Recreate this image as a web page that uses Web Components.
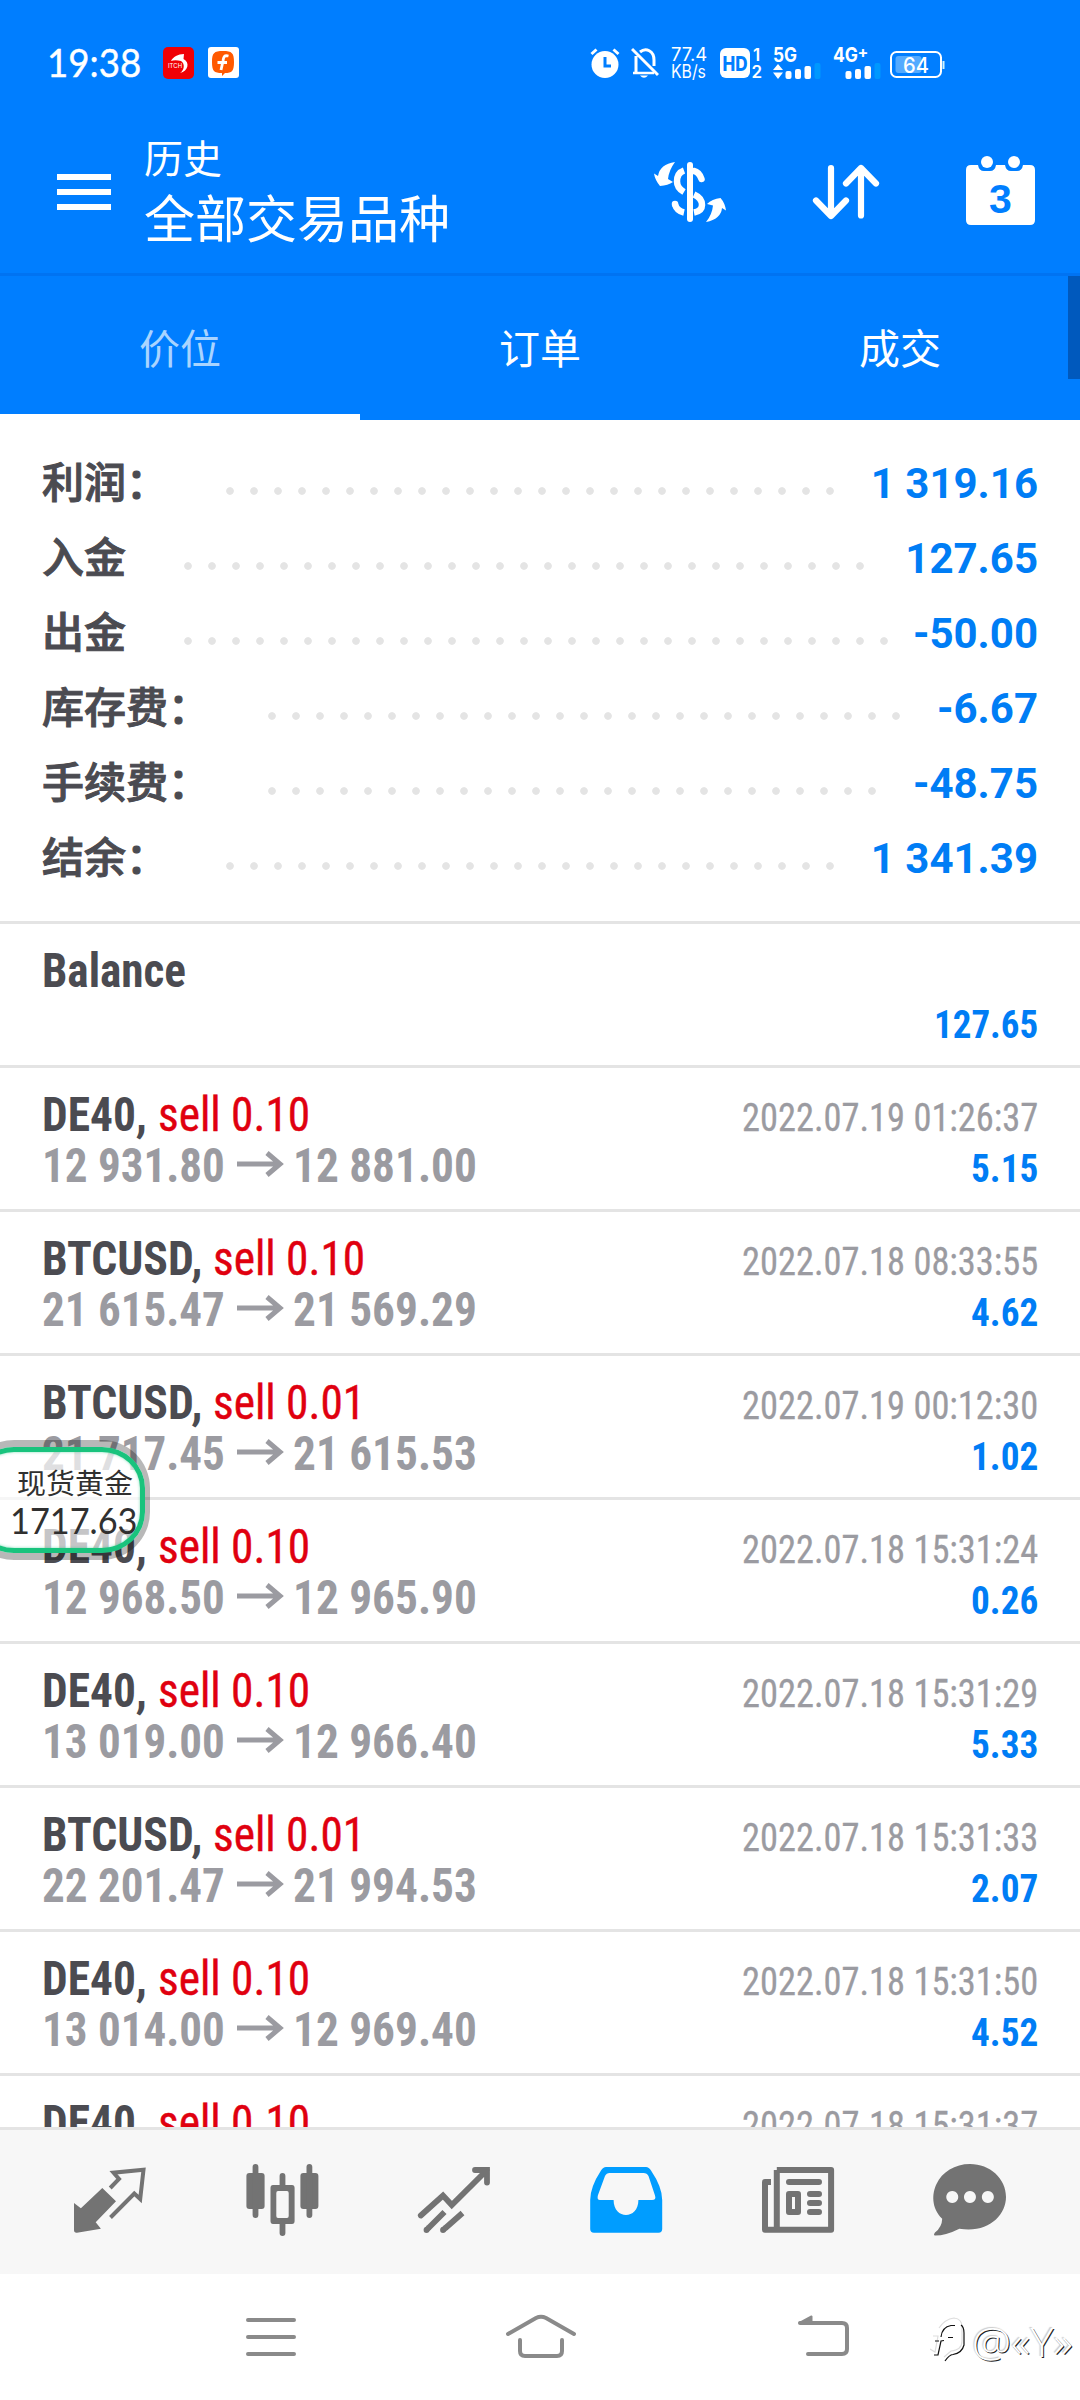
<!DOCTYPE html>
<html lang="zh-CN">
<head>
<meta charset="utf-8">
<title>历史</title>
<style>
html,body{margin:0;padding:0}
body{width:1080px;height:2400px;overflow:hidden;background:#fff;font-family:Roboto,"Noto Sans CJK SC",sans-serif}
</style>
</head>
<body>
<history-screen></history-screen>
<script>
const define=(name,html,after)=>{
  const t=document.createElement('template');
  t.innerHTML=html;
  customElements.define(name,class extends HTMLElement{
    connectedCallback(){
      if(this.shadowRoot)return;
      this.attachShadow({mode:'open'}).append(t.content.cloneNode(true));
      if(after)after(this,this.shadowRoot);
    }
  });
};

/* Text squeezed or stretched horizontally to a given width */
define('fit-text',`<style>
:host{display:inline-block;white-space:pre;flex:none}
span{display:inline-block;transform-origin:0 50%}
</style><span><slot></slot></span>`,(el,root)=>{
  const s=root.querySelector('span'),w=+el.getAttribute('w');
  s.textContent=el.textContent;
  const n=s.offsetWidth;
  s.style.transform='scaleX('+w/n+')';
  el.style.width=w+'px';
});

define('status-bar',`<style>
:host{display:flex;height:126px;box-sizing:border-box;padding:0 135px 0 47px;align-items:center;color:#fff;font-family:Lato,sans-serif}
.time{font-size:39px;line-height:60px;margin-top:-3px;-webkit-text-stroke:.4px #fff}
svg{display:block;flex:none}
.apps{display:flex;gap:14px;margin-left:22px}
.right{display:flex;align-items:center;margin-left:auto;height:34px;margin-top:-1px}
.net{display:flex;flex-direction:column;width:37px;margin-left:12px;font-family:Inter,sans-serif}
.net fit-text{font-size:18px;line-height:17px}
</style>
<fit-text class="time" w="94">19:38</fit-text>
<div class="apps">
<svg width="31" height="32" viewBox="0 0 31 32"><rect width="31" height="32" rx="5" fill="#f00005"/><path d="M8 14C10 10 15 7 21 7L20.500 12C27 15 25.500 24 17 26C21 23.500 22.500 17 18 14Q12 12.500 8 14Z" fill="#fff"/><text x="5" y="21" font-size="6" font-family="Inter" fill="#fff">ITCH</text></svg>
<svg width="31" height="31" viewBox="0 0 31 31"><rect width="31" height="31" rx="3" fill="#fff"/><path d="M15 4C24 4 26 6 26 15C26 24 24 26 17 26L14 29V26C6 26 4 24 4 15C4 6 6 4 15 4Z" fill="#ff5900"/><path d="M20.500 9C16 8 15.500 10 15 14L13 23M9.500 15.500H19" stroke="#fff" stroke-width="2.800" fill="none"/></svg>
</div>
<div class="right">
<svg width="30" height="34" viewBox="0 0 30 34"><circle cx="15" cy="18.500" r="13.500" fill="#fff"/><path d="M1.500 8L6.500 3.500M28.500 8L23.500 3.500" stroke="#fff" stroke-width="3"/><path d="M15 11V20H21" fill="none" stroke="#007eff" stroke-width="3"/></svg>
<svg width="28" height="34" viewBox="0 0 28 34" style="margin-left:11px"><path d="M1 3L27 29M5 10V26M9 6C15 1 23 5 23 14V20" fill="none" stroke="#fff" stroke-width="3"/><path d="M2 27H23" stroke="#fff" stroke-width="2.500"/><path d="M9 29.500H17Q13 34 9 29.500Z" fill="#fff"/></svg>
<div class="net"><fit-text w="36">77.4</fit-text><fit-text w="35">KB/s</fit-text></div>
<svg width="43" height="34" viewBox="0 0 43 34" style="margin-left:12px"><rect y="2" width="30" height="30" rx="6" fill="#fff"/><text x="2.500" y="24.500" font-family="Inter" font-weight="800" font-size="20" textLength="25" lengthAdjust="spacingAndGlyphs" fill="#007eff">HD</text><text x="33" y="15" font-family="Inter" font-weight="600" font-size="17" fill="#fff">1</text><text x="31.500" y="32" font-family="Inter" font-weight="600" font-size="17" fill="#fff">2</text></svg>
<svg width="48" height="34" viewBox="0 0 48 34" style="margin-left:10px"><text x="0" y="16" font-family="Inter" font-weight="700" font-size="20" textLength="24" lengthAdjust="spacingAndGlyphs" fill="#fff">5G</text><path d="M0 24L5 18L10 24ZM0 26.500L5 33L10 26.500Z" fill="#fff"/><g fill="#fff"><rect x="12.500" y="25" width="6" height="8" rx="2"/><rect x="22" y="23" width="6" height="10" rx="2"/><rect x="31.500" y="20" width="6.500" height="13" rx="2"/></g><rect x="41.500" y="17" width="6" height="16" rx="2" fill="#0098ff"/></svg>
<svg width="48" height="34" viewBox="0 0 48 34" style="margin-left:12px"><text x="0" y="16" font-family="Inter" font-weight="700" font-size="20" textLength="25" lengthAdjust="spacingAndGlyphs" fill="#fff">4G</text><text x="24.500" y="12" font-family="Inter" font-weight="700" font-size="16" fill="#fff">+</text><g fill="#fff"><rect x="12.500" y="25" width="6" height="8" rx="2"/><rect x="22" y="23" width="6" height="10" rx="2"/><rect x="31.500" y="20" width="6.500" height="13" rx="2"/></g><rect x="41.500" y="17" width="6" height="16" rx="2" fill="#0098ff"/></svg>
<svg width="55" height="34" viewBox="0 0 55 34" style="margin-left:9px"><rect x="1" y="6" width="50" height="25" rx="5.500" fill="none" stroke="#fff" stroke-width="2"/><rect x="5.500" y="10" width="26" height="17" rx="3" fill="#53aaff"/><path d="M53.500 15V23" stroke="#d0f4ff" stroke-width="2"/><text x="13" y="27" font-family="Inter" font-weight="500" font-size="21.500" textLength="26" lengthAdjust="spacingAndGlyphs" fill="#fff">64</text></svg>
</div>`);

define('app-header',`<style>
:host{display:flex;height:147px;align-items:flex-start;color:#fff;padding-left:57px;border-bottom:3px solid #0073f2;font-family:"Noto Sans CJK SC",sans-serif}
.menu{display:flex;flex-direction:column;gap:9px;width:54px;padding-top:48px}
.menu i{height:6px;background:#fff}
.titles{display:flex;flex-direction:column;padding-left:33px;flex:1}
.a{font-size:39px;line-height:50px;margin-top:5px}
.b{font-size:51px;line-height:60px;margin-top:5px}
svg{display:block;flex:none}
</style>
<div class="menu"><i></i><i></i><i></i></div>
<div class="titles"><fit-text class="a" w="78">历史</fit-text><fit-text class="b" w="306">全部交易品种</fit-text></div>
<svg width="426" height="147" viewBox="654 126 426 147">
<g fill="none" stroke="#fff" stroke-linecap="round">
<path d="M690 165V219" stroke-width="6"/>
<path d="M684 170.500Q677 173 677 181.500Q677 188 684 192" stroke-width="6.500" stroke-linecap="butt"/>
<path d="M694 171Q699 172 701.500 179" stroke-width="6.500"/>
<path d="M694 194.500Q702 198 702 205Q702 211 694 212.500" stroke-width="6.500" stroke-linecap="butt"/>
<path d="M684 212.500Q677 211 675 204.500" stroke-width="6.500" stroke-linecap="butt"/>
<path d="M831 168V213M816 200.500L831 216L846 200.500M861 215.500V168M846 183.500L861 168L876 183.500" stroke-width="6.200" stroke-linejoin="round"/>
</g>
<circle cx="675" cy="204" r="3.250" fill="#fff"/>
<path d="M675 162Q660 164 658 176L654 173.500Q655 180 660 186Q668 185.500 673 182L668 179Q669 170 675 162Z" fill="#fff"/>
<path d="M706 222Q721 219 722 208L726 210.500Q725 203 720.500 198Q712 199 707 204L713 205.500Q712 215 706 222Z" fill="#fff"/>
<path d="M971 165H978Q979 171 984 171H990Q995 171 996 165H1005Q1006 171 1011 171H1017Q1022 171 1023 165H1030Q1035 165 1035 170V220Q1035 225 1030 225H971Q966 225 966 220V170Q966 165 971 165Z" fill="#fff"/>
<circle cx="987" cy="162" r="6" fill="#fff"/><circle cx="1014" cy="162" r="6" fill="#fff"/>
<text x="1000.500" y="212.500" text-anchor="middle" font-family="Liberation Sans" font-weight="700" font-size="41" fill="#007eff">3</text>
</svg>`);

define('tab-bar',`<style>
:host{display:flex;height:144px;position:relative;color:#fff;font:41px/140px "Noto Sans CJK SC",sans-serif}
::slotted(*){flex:1;text-align:center;box-sizing:border-box;height:144px}
::slotted([active]){color:#a9d4ff;border-bottom:6px solid #fff}
i{position:absolute;right:0;top:0;width:12px;height:103px;background:#0059bd}
</style><slot></slot><i></i>`);

define('summary-row',`<style>
:host{display:flex;height:75px;align-items:center}
.l{font:500 42px/75px "Noto Sans CJK SC",sans-serif;color:#4b4b51;-webkit-text-stroke:1px #4b4b51}
.d{height:8px;margin:22px 0 0 50px;background:radial-gradient(circle at center,#e4e4e4 3.400px,#e4e4e400 4.200px) 0 0/24px 8px}
.v{margin-left:auto;font:700 42px/67px Roboto,sans-serif;color:#007df5;padding-top:8px;white-space:pre}
</style><span class="l"></span><span class="d"></span><span class="v"></span>`,(el,r)=>{
  const g=n=>el.getAttribute(n);
  r.querySelector('.l').textContent=g('label');
  r.querySelector('.d').style.width=g('dots')*24+'px';
  r.querySelector('.v').textContent=g('value');
});

define('deal-row',`<style>
:host{display:flex;flex-direction:column;height:144px;box-sizing:border-box;border-top:3px solid #e4e4e4;padding:21px 42px 0;flex:none;font-family:"Roboto Condensed",Roboto,sans-serif;font-stretch:75%}
div{display:flex;height:51px;align-items:baseline;justify-content:space-between;line-height:51px;font-size:48px}
.s{font-weight:700;color:#4b4b51}
.o{color:#e0000f;margin-left:11px;-webkit-text-stroke:.4px #e0000f}
.p{font-weight:700;color:#9b9ba1}
svg{margin:0 9px 0 11px}
.t{font-size:39.500px;color:#9b9ba1;-webkit-text-stroke:.3px #9b9ba1}
.v{font-size:39.500px;font-weight:700;color:#007df5;margin-left:auto}
.v.alone{margin-top:3px}
p{margin:0;display:flex;align-items:baseline}
</style><div class="one"><p></p></div><div class="two"></div>`,(el,r)=>{
  const g=n=>el.getAttribute(n);
  const add=(p,c,t,w)=>t&&p.insertAdjacentHTML('beforeend','<fit-text class="'+c+'" w="'+w+'">'+t+'</fit-text>');
  const one=r.querySelector('.one'),two=r.querySelector('.two');
  const sym=g('symbol'),p1=one.querySelector('p');
  add(p1,'s',sym,{'DE40,':105,'BTCUSD,':160}[sym]||144);
  add(p1,'o',g('order'),152);
  add(one,'t',g('time'),296);
  if(g('from')){
    const p2=document.createElement('p');
    two.append(p2);
    add(p2,'p',g('from'),183);
    p2.insertAdjacentHTML('beforeend','<svg width="48" height="32" viewBox="0 0 48 32"><path d="M1 14H45M31 3L44 14L31 25" fill="none" stroke="#9b9ba1" stroke-width="5"/></svg>');
    add(p2,'p',g('to'),184);
  }
  add(two,g('from')?'v':'v alone',g('profit'),g('profit').length>4?104:67);
});

define('price-float',`<style>
:host{position:absolute;left:-34px;top:1440px;width:184px;height:120px;box-sizing:border-box;border:solid rgba(0,0,0,.28);border-width:7px 5px;border-radius:48px;background-clip:padding-box}
.in{height:106px;box-sizing:border-box;border:5px solid #19c37d;border-radius:43px/41px;background:rgba(255,255,255,.68);color:#303030;padding-left:34px;display:flex;flex-direction:column;box-shadow:inset 0 0 3px #19c37d88}
.n{font:28.500px/36px "Noto Sans CJK SC",sans-serif;margin:12px 0 0 7px}
.v{font:37px/36px Lato,sans-serif;margin-top:2px}
</style><div class="in"><fit-text class="n" w="116">现货黄金</fit-text><fit-text class="v" w="128">1717.63</fit-text></div>`);

const icons={
trade:`<path d="M32.300 26L46 39.300L25.700 60.300L30.900 66.700L7 70.700Q4 71 4 68V41L10.900 46.300Z"/><path d="M40.200 26L49 17L43.500 10.700L73.500 7.700L70.200 37L64.300 31.500L40.500 55.500" fill="none" stroke="currentColor" stroke-width="4"/>`,
candles:`<rect x="4.400" y="11" width="18.200" height="36" rx="3"/><rect x="10.600" y="2" width="5.800" height="54" rx="2.900"/><path fill-rule="evenodd" d="M31 23H50Q52.600 23 52.600 26V59Q52.600 62 50 62H31Q28.500 62 28.500 59V26Q28.500 23 31 23ZM36 29Q34.300 29 34.300 31V54Q34.300 56 36 56H45Q46.700 56 46.700 54V31Q46.700 29 45 29Z"/><path d="M40.500 14V23M40.500 61V71" stroke="currentColor" stroke-width="5.800" stroke-linecap="round"/><rect x="58.400" y="11" width="18" height="36" rx="3"/><rect x="64.500" y="2" width="5.800" height="54" rx="2.900"/>`,
trend:`<path d="M6.800 53.500L29 33.500L37.800 43L73 8M61 8H73V20.500" fill="none" stroke="currentColor" stroke-width="5.800" stroke-linecap="round"/><path d="M14.500 66L30.500 50M31.500 66L48.500 51" stroke="currentColor" stroke-width="5.800"/><circle cx="12.500" cy="68" r="2.900"/><circle cx="29" cy="68" r="2.900"/><path d="M12.500 68L15 65.500M29 68L32 65.500" stroke="currentColor" stroke-width="5.800"/>`,
inbox:`<path fill-rule="evenodd" d="M20 5H60Q63 5 65 8.500Q76.200 25 76.200 38V67Q76.200 70.700 72.500 70.700H8Q4.200 70.700 4.200 67V38Q4.200 25 15 8.500Q17 5 20 5ZM23.500 11Q20.500 11 19 14L12 33Q10.500 38 14 38H27.600C27.600 58 52.400 58 52.400 38H66Q70.500 38 69 33.500L62.500 14Q61 11 57.500 11Z"/>`,
news:`<path d="M18.800 8H73.100V67.700H7V20H13M18.800 8V67.700" fill="none" stroke="currentColor" stroke-width="6" stroke-linejoin="round"/><path d="M31 20H61M52 32H61M52 41H61M52 50H61" stroke="currentColor" stroke-width="6" stroke-linecap="round"/><path fill-rule="evenodd" d="M31 29H40Q43 29 43 32V50Q43 53 40 53H31Q28 53 28 50V32Q28 29 31 29ZM34 35V47H37V35Z"/>`,
chat:`<path fill-rule="evenodd" d="M40 2C60 2 76 16.500 76 35C76 53.500 58 71.500 29.400 66.700Q16 73.500 5 73.500Q3 73 5 70.500Q12 65 12.200 56.700C1 46 2 31 6.500 22C12 10 25 2 40 2ZM22.200 29a6 6 0 1 0 .1 0ZM39.900 29a6 6 0 1 0 .1 0ZM57.800 29a6 6 0 1 0 .1 0Z"/>`};
define('nav-icon',`<style>:host{display:flex;width:172px;justify-content:center;color:#737373}:host([active]){color:#009dff}svg{display:block;fill:currentColor}</style><svg width="80" height="80" viewBox="0 0 80 80"></svg>`,
 (el,r)=>{r.querySelector('svg').innerHTML=icons[el.getAttribute('name')]});

define('bottom-nav',`<style>:host{display:flex;height:147px;box-sizing:border-box;background:#f7f7f7;border-top:3px solid #e4e4e4;padding:32px 24px 0;flex:none;position:relative}</style><slot></slot>`);

define('system-nav',`<style>
:host{display:flex;height:126px;flex:none;background:#fff;align-items:flex-start;padding-left:240px}
svg{display:block;flex:none}
.wm{display:flex;align-items:center;width:150px;height:126px;color:#fff;margin-top:4px;font:300 41px/50px "Open Sans",sans-serif}
.wm svg{margin-top:-5px}
.wm fit-text{text-shadow:1px 1px .6px #222,-1px -1px 1px #ccc}
</style>
<svg width="690" height="126" viewBox="240 2274 690 126" fill="none" stroke="#8a8a8a" stroke-width="4" stroke-linecap="round" stroke-linejoin="round">
<path d="M248 2320H294M248 2337H294M248 2354H294"/>
<path d="M508 2334L536 2318Q541 2315.500 546 2318L574 2334M520 2340V2351Q520 2356 525 2356H557Q562 2356 562 2351V2340"/>
<path d="M800 2323H842Q847 2323 847 2328V2349Q847 2354 842 2354H808"/>
<path d="M799.500 2323L811.500 2316.500V2323Z" fill="#8a8a8a" stroke-width="2"/>
</svg>
<div class="wm"><svg width="42" height="50" viewBox="0 0 42 50"><g fill="none" stroke-width="1.200"><path d="M1 37L6 40L9 24H4M10 16Q16 7 25 6Q34 7 33 17V29Q33 38 22 39L15 45" stroke="#ddd" transform="translate(-1 -2)"/><path d="M4 40H8L11 26L14 25.500M5 26H9M11 22Q12 12 21 10.500H25M18 22.500H23M31 10Q34 12 34 18V30Q32 38 23 39.500Q19 40 15 46" stroke="#111" transform="translate(0 1)"/></g></svg><fit-text w="101">@«Y»</fit-text></div>`);

define('history-screen',`<style>
:host{display:flex;flex-direction:column;width:1080px;height:2400px;position:relative;overflow:hidden;background:#fff}
header{background:#007eff;flex:none}
main{height:1707px;overflow:hidden;flex:none;display:flex;flex-direction:column}
section{padding:22px 42px 29px;flex:none}
</style>
<header><status-bar></status-bar><app-header></app-header>
<tab-bar><span active>价位</span><span>订单</span><span>成交</span></tab-bar></header>
<main>
<section>
<summary-row label="利润：" dots="26" value="1 319.16"></summary-row>
<summary-row label="入金" dots="29" value="127.65"></summary-row>
<summary-row label="出金" dots="30" value="-50.00"></summary-row>
<summary-row label="库存费：" dots="27" value="-6.67"></summary-row>
<summary-row label="手续费：" dots="26" value="-48.75"></summary-row>
<summary-row label="结余：" dots="26" value="1 341.39"></summary-row>
</section>
<deal-row symbol="Balance" profit="127.65"></deal-row>
<deal-row symbol="DE40," order="sell 0.10" time="2022.07.19 01:26:37" from="12 931.80" to="12 881.00" profit="5.15"></deal-row>
<deal-row symbol="BTCUSD," order="sell 0.10" time="2022.07.18 08:33:55" from="21 615.47" to="21 569.29" profit="4.62"></deal-row>
<deal-row symbol="BTCUSD," order="sell 0.01" time="2022.07.19 00:12:30" from="21 717.45" to="21 615.53" profit="1.02"></deal-row>
<deal-row symbol="DE40," order="sell 0.10" time="2022.07.18 15:31:24" from="12 968.50" to="12 965.90" profit="0.26"></deal-row>
<deal-row symbol="DE40," order="sell 0.10" time="2022.07.18 15:31:29" from="13 019.00" to="12 966.40" profit="5.33"></deal-row>
<deal-row symbol="BTCUSD," order="sell 0.01" time="2022.07.18 15:31:33" from="22 201.47" to="21 994.53" profit="2.07"></deal-row>
<deal-row symbol="DE40," order="sell 0.10" time="2022.07.18 15:31:50" from="13 014.00" to="12 969.40" profit="4.52"></deal-row>
<deal-row symbol="DE40," order="sell 0.10" time="2022.07.18 15:31:37" profit=""></deal-row>
</main>
<bottom-nav><nav-icon name="trade"></nav-icon><nav-icon name="candles"></nav-icon><nav-icon name="trend"></nav-icon><nav-icon name="inbox" active></nav-icon><nav-icon name="news"></nav-icon><nav-icon name="chat"></nav-icon></bottom-nav>
<system-nav></system-nav>
<price-float></price-float>`);
</script>
</body>
</html>
